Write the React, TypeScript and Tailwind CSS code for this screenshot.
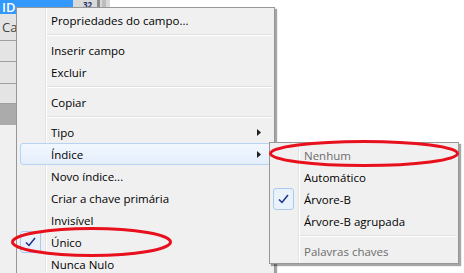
import React from "react";

type Item =
  | { kind: "sep" }
  | { kind: "item"; label: string; sub?: boolean; hot?: boolean; checked?: boolean; disabled?: boolean };

const mainItems: Item[] = [
  { kind: "item", label: "Propriedades do campo..." },
  { kind: "sep" },
  { kind: "item", label: "Inserir campo" },
  { kind: "item", label: "Excluir" },
  { kind: "sep" },
  { kind: "item", label: "Copiar" },
  { kind: "sep" },
  { kind: "item", label: "Tipo", sub: true },
  { kind: "item", label: "Índice", sub: true, hot: true },
  { kind: "item", label: "Novo índice..." },
  { kind: "item", label: "Criar a chave primária" },
  { kind: "item", label: "Invisível" },
  { kind: "item", label: "Único", checked: true },
  { kind: "item", label: "Nunca Nulo" },
];

const subItems: Item[] = [
  { kind: "item", label: "Nenhum", disabled: true },
  { kind: "item", label: "Automático" },
  { kind: "item", label: "Árvore-B", checked: true },
  { kind: "item", label: "Árvore-B agrupada" },
  { kind: "sep" },
  { kind: "item", label: "Palavras chaves", disabled: true },
];

function Check() {
  return (
    <div className="absolute left-[3px] top-[0px] w-[21px] h-[22px] rounded-[3px] border border-[#a9c9ef] bg-[#e9f1fb] flex items-center justify-center">
      <svg width="11" height="10" viewBox="0 0 11 10">
        <path d="M1 5.5 L4 8.5 L10 1" fill="none" stroke="#1b2f8f" strokeWidth="1.5" />
      </svg>
    </div>
  );
}

function Arrow() {
  return (
    <svg width="4" height="7" viewBox="0 0 4 7" className="absolute right-[13px] top-[8px]">
      <path d="M0 0 L4 3.5 L0 7 Z" fill="#202020" />
    </svg>
  );
}

function MenuRows({ items }: { items: Item[] }) {
  return (
    <>
      {items.map((it, i) =>
        it.kind === "sep" ? (
          <div key={i} className="h-[8px] flex items-center pl-[30px] pr-[2px]">
            <div className="w-full border-t border-t-[#e0e0e0] border-b border-b-white" />
          </div>
        ) : (
          <div key={i} className="relative h-[22px]">
            {it.hot && (
              <div className="absolute left-[3px] right-[3px] top-0 bottom-0 rounded-[3px] border border-[#b7d3f3] bg-[linear-gradient(#f3f8fe,#e4eefb)]" />
            )}
            {it.checked && <Check />}
            <div
              className={
                "relative h-full flex items-center pl-[34px] pt-[1px] text-[11.5px] whitespace-nowrap " +
                (it.disabled ? "text-[#6d6d6d]" : "text-black")
              }
            >
              {it.label}
            </div>
            {it.sub && <Arrow />}
          </div>
        )
      )}
    </>
  );
}

export default function App() {
  return (
    <div
      className="relative w-[464px] h-[273px] overflow-hidden bg-white"
      style={{ fontFamily: '"Open Sans", "Noto Sans", Arial, sans-serif' }}
    >
      {/* janela de fundo */}
      <div className="flex flex-col h-full">
        <div className="flex h-[14px]">
          <div className="w-[73px] bg-[#3399ff] text-white text-[13px] leading-[15px] font-semibold pl-[2px]">ID</div>
          <div className="w-[37px] bg-[#d9d9d9] flex">
            <span className="pl-[10px] pt-[1px] text-[8px] leading-[8px] text-[#1c2f6e] font-bold">32</span>
            <div className="ml-[5px] w-[3px] bg-[#8a8a8a]" />
            <div className="ml-[2px] w-[4px] bg-[#bdbdbd]" />
          </div>
          <div className="flex-1 bg-white" />
        </div>
        <div className="w-[16px] h-[27px] bg-[#e4e4e4] border-b border-[#a0a0a0] text-[13px] text-[#444] leading-[26px] pl-[2px] overflow-hidden">Ca</div>
        <div className="w-[16px] h-[21px] bg-[#e4e4e4] border-b border-[#a0a0a0]" />
        <div className="w-[16px] h-[22px] bg-[#e4e4e4] border-b border-[#a0a0a0]" />
        <div className="w-[16px] h-[20px] bg-[#e4e4e4] border-b border-[#a0a0a0]" />
        <div className="w-[16px] h-[21px] bg-[#ababab]" />
        <div className="w-[16px] flex-1 bg-[#f0f0f0]" />
      </div>

      {/* menu principal */}
      <div className="absolute left-[16px] top-[7px] w-[259px] h-[280px] border border-[#979797] shadow-[2px_2px_1px_rgba(0,0,0,0.35)] pt-[1px] bg-[linear-gradient(90deg,#f0f0f0_0_28px,#e2e3e3_28px_29px,#ffffff_29px_30px,#f0f0f0_30px)]">
        <MenuRows items={mainItems} />
      </div>

      {/* submenu Índice */}
      <div className="absolute left-[269px] top-[142px] w-[190px] border border-[#979797] shadow-[2px_2px_1px_rgba(0,0,0,0.35)] pt-[1px] pb-[1px] bg-[linear-gradient(90deg,#f0f0f0_0_28px,#e2e3e3_28px_29px,#ffffff_29px_30px,#f0f0f0_30px)]">
        <MenuRows items={subItems} />
      </div>

      {/* marcações vermelhas */}
      <svg className="absolute inset-0 pointer-events-none" width="464" height="273">
        <ellipse cx="364" cy="153.5" rx="93.5" ry="12" fill="none" stroke="#e8101c" strokeWidth="3" />
        <ellipse cx="91.5" cy="242" rx="79" ry="13.5" fill="none" stroke="#e8101c" strokeWidth="3" />
      </svg>
    </div>
  );
}
